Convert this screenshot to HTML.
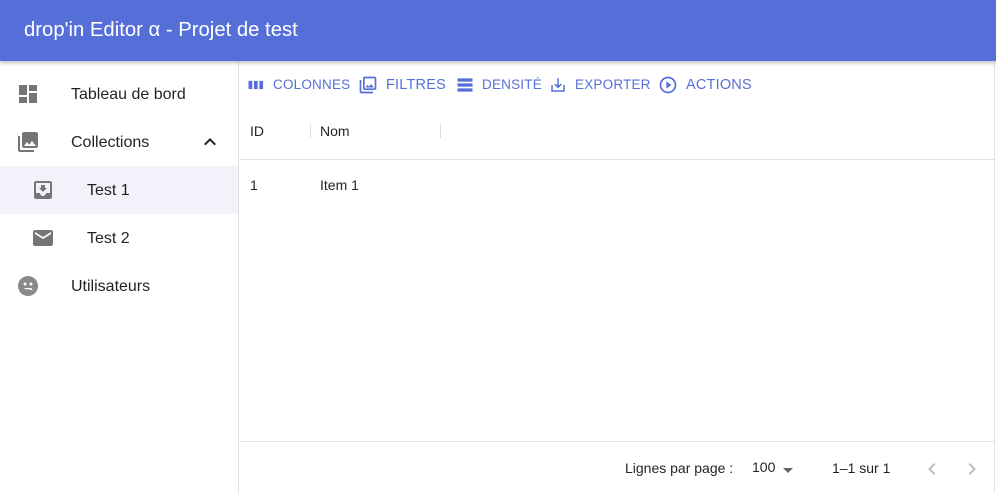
<!DOCTYPE html>
<html><head><meta charset="utf-8"><style>
*{box-sizing:border-box;margin:0;padding:0}
body{width:996px;height:493px;overflow:hidden;background:#fff;font-family:"Liberation Sans",sans-serif;position:relative}
.top{position:absolute;left:0;top:0;width:996px;height:61px;background:#566fd8;color:#fff;font-size:20.3px;padding:19px 0 0 24px;box-shadow:0 2px 4px rgba(0,0,0,.25);z-index:2}
.side{position:absolute;left:0;top:61px;width:239px;height:432px;border-right:1px solid #e0e0e0}
.item{position:absolute;left:0;width:238px;height:48px;font-size:16px;color:rgba(0,0,0,.87)}
.item span{position:absolute;top:16px}
.item svg{position:absolute;top:12px;fill:#757575}
.main{position:absolute;left:240px;top:61px;width:755px;height:432px;border-right:1px solid #e0e0e0}
.tb{position:absolute;top:16px;font-size:13.5px;color:#566fd8;letter-spacing:.2px}
.tb svg{fill:#566fd8;position:absolute;top:-1px}
.txt{position:absolute;font-size:14px;color:rgba(0,0,0,.87)}
</style></head><body>
<div class="top">drop'in Editor α - Projet de test</div>
<div class="side">
<div class="item" style="top:9px"><svg style="left:16px" width="24" height="24" viewBox="0 0 24 24"><path d="M3 13h8V3H3v10zm0 8h8v-6H3v6zm10 0h8V11h-8v10zm0-18v6h8V3h-8z"/></svg><span style="left:71px">Tableau de bord</span></div>
<div class="item" style="top:57px"><svg style="left:16px" width="24" height="24" viewBox="0 0 24 24"><path d="M22 16V4c0-1.1-.9-2-2-2H8c-1.1 0-2 .9-2 2v12c0 1.1.9 2 2 2h12c1.1 0 2-.9 2-2zm-11-4l2.03 2.71L16 11l4 5H8l3-4zM2 6v14c0 1.1.9 2 2 2h14v-2H4V6H2z"/></svg><span style="left:71px">Collections</span><svg style="left:198px;fill:#222" width="24" height="24" viewBox="0 0 24 24"><path d="M7.41 15.41L12 10.83l4.59 4.58L18 14l-6-6-6 6z"/></svg></div>
<div class="item" style="top:105px;background:#f2f2fb"><svg style="left:31px" width="24" height="24" viewBox="0 0 24 24"><path d="M19 3H5c-1.1 0-2 .9-2 2v14c0 1.1.9 2 2 2h14c1.1 0 2-.9 2-2V5c0-1.1-.9-2-2-2zm0 12h-4c0 1.66-1.35 3-3 3s-3-1.34-3-3H5V5h14v10zm-3-5h-2V7h-4v3H8l4 4 4-4z"/></svg><span style="left:87px">Test 1</span></div>
<div class="item" style="top:153px"><svg style="left:31px" width="24" height="24" viewBox="0 0 24 24"><path d="M20 4H4c-1.1 0-2 .9-2 2v12c0 1.1.9 2 2 2h16c1.1 0 2-.9 2-2V6c0-1.1-.9-2-2-2zm0 4l-8 5-8-5V6l8 5 8-5v2z"/></svg><span style="left:87px">Test 2</span></div>
<div class="item" style="top:201px"><svg style="left:16px;fill:#8a8a8a" width="24" height="24" viewBox="0 0 24 24"><path d="M12 2C6.5 2 2 6.5 2 12s4.5 10 10 10 10-4.5 10-10S17.5 2 12 2zM9 8.5a1.5 1.5 0 110 3 1.5 1.5 0 010-3zm6 0a1.5 1.5 0 110 3 1.5 1.5 0 010-3zM8 14h6c1.5 0 2.5 1 2.5 2h-2c0-.5-.5-.8-1-.8H9.5L8 14z"/></svg><span style="left:71px">Utilisateurs</span></div>
</div>
<div class="main">
<div class="tb" style="left:6px"><svg width="20" height="20" viewBox="0 0 24 24" style="top:-2px"><path d="M3 7h4.5v10H3zm6.5 0h4.5v10H9.5zm6.5 0h4.5v10H16z"/></svg><span style="position:absolute;left:27px;white-space:nowrap">COLONNES</span></div>
<div class="tb" style="left:118px;font-size:14.5px"><svg width="20" height="20" viewBox="0 0 24 24" style="top:-2px"><path d="M20 4v12H8V4h12m0-2H8c-1.1 0-2 .9-2 2v12c0 1.1.9 2 2 2h12c1.1 0 2-.9 2-2V4c0-1.1-.9-2-2-2zm-8.5 9.67l1.69 2.26 2.48-3.1L19 15H9zM2 6v14c0 1.1.9 2 2 2h14v-2H4V6H2z"/></svg><span style="position:absolute;left:28px;white-space:nowrap">FILTRES</span></div>
<div class="tb" style="left:215px"><svg width="20" height="20" viewBox="0 0 24 24" style="top:-2px"><path d="M3 4h18v4H3zm0 6h18v4H3zm0 6h18v4H3z"/></svg><span style="position:absolute;left:27px;white-space:nowrap">DENSITÉ</span></div>
<div class="tb" style="left:309px"><svg width="18" height="18" viewBox="0 0 24 24"><path d="M19 12v7H5v-7H3v9h18v-9h-2zm-6 .67l2.59-2.58L17 11.5l-5 5-5-5 1.41-1.41L11 12.67V3h2z"/></svg><span style="position:absolute;left:26px;white-space:nowrap">EXPORTER</span></div>
<div class="tb" style="left:418px;font-size:14.5px"><svg width="20" height="20" viewBox="0 0 24 24" style="top:-2px"><path d="M10 16.5l6-4.5-6-4.5v9zM12 2C6.48 2 2 6.48 2 12s4.48 10 10 10 10-4.48 10-10S17.52 2 12 2zm0 18c-4.41 0-8-3.59-8-8s3.59-8 8-8 8 3.59 8 8-3.59 8-8 8z"/></svg><span style="position:absolute;left:28px;white-space:nowrap">ACTIONS</span></div>
<div class="txt" style="left:10px;top:62px">ID</div>
<div style="position:absolute;left:70px;top:63px;width:1px;height:14px;background:#ddd"></div>
<div class="txt" style="left:80px;top:62px">Nom</div>
<div style="position:absolute;left:200px;top:63px;width:1px;height:14px;background:#ddd"></div>
<div style="position:absolute;left:0;top:98px;width:755px;height:1px;background:#e0e0e0"></div>
<div class="txt" style="left:10px;top:116px">1</div>
<div class="txt" style="left:80px;top:116px">Item 1</div>
<div style="position:absolute;left:0;top:380px;width:755px;height:1px;background:#e0e0e0"></div>
<div class="txt" style="left:385px;top:399px">Lignes par page :</div>
<div class="txt" style="left:512px;top:398px">100</div>
<svg style="position:absolute;left:536px;top:397px" width="24" height="24" viewBox="0 0 24 24" fill="#666"><path d="M7 10l5 5 5-5z"/></svg>
<div class="txt" style="left:592px;top:399px">1–1 sur 1</div>
<svg style="position:absolute;left:680px;top:396px" width="24" height="24" viewBox="0 0 24 24" fill="#bbb"><path d="M15.41 7.41L14 6l-6 6 6 6 1.41-1.41L10.83 12z"/></svg>
<svg style="position:absolute;left:720px;top:396px" width="24" height="24" viewBox="0 0 24 24" fill="#bbb"><path d="M10 6L8.59 7.41 13.17 12l-4.58 4.59L10 18l6-6z"/></svg>
</div>
</body></html>
